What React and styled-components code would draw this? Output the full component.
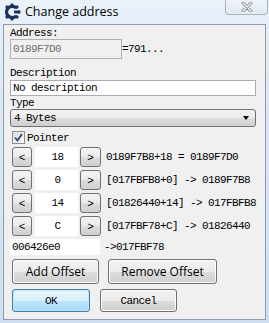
import styled, { createGlobalStyle } from "styled-components";

const GlobalStyle = createGlobalStyle`
  html, body { margin: 0; padding: 0; background: #c9dbee; }
`;

const mono = `"Liberation Mono", "DejaVu Sans Mono", monospace`;
const sans = `"Open Sans", "Noto Sans", sans-serif`;

const offsets = [
  { value: "18", text: "0189F7B8+18 = 0189F7D0" },
  { value: "0", text: "[017FBFB8+0] -> 0189F7B8" },
  { value: "14", text: "[01826440+14] -> 017FBFB8" },
  { value: "C", text: "[017FBF78+C] -> 01826440" },
];

const Window = styled.div`
  width: 269px;
  height: 323px;
  display: flex;
  flex-direction: column;
  background: linear-gradient(180deg, #e9f1f9 0%, #dce8f4 30%, #cfe0f0 100%);
  box-sizing: border-box;
`;

const TitleBar = styled.div`
  height: 24px;
  display: flex;
  align-items: flex-start;
  flex-shrink: 0;
`;

const AppIcon = styled.svg`
  width: 18px;
  height: 18px;
  margin: 3px 0 0 3px;
`;

const Title = styled.span`
  font-family: ${sans};
  font-size: 12.5px;
  color: #000;
  margin: 3px 0 0 4px;
  line-height: 17px;
`;

const CloseButton = styled.div`
  margin-left: auto;
  margin-right: 1px;
  width: 43px;
  height: 15px;
  box-sizing: border-box;
  border: 1px solid #a9b5c2;
  border-top: none;
  border-radius: 0 0 4px 4px;
  background: linear-gradient(180deg, #eef3f8 0%, #e2e9f1 100%);
  display: flex;
  align-items: center;
  justify-content: center;
`;

const Client = styled.div`
  flex: 1;
  margin: 0 3px 3px 3px;
  background: #f0f0f0;
  border: 1px solid #8e9bab;
  padding: 1px 0 0 6px;
  display: flex;
  flex-direction: column;
`;

const Label = styled.div`
  font-family: ${mono};
  font-size: 11px;
  letter-spacing: -0.6px;
  line-height: 12px;
  height: 12px;
  color: #000;
  margin-top: ${(p) => p.$top || 0}px;
`;

const Row = styled.div`
  display: flex;
  align-items: center;
  margin-top: ${(p) => p.$top || 0}px;
  margin-left: ${(p) => p.$indent || 0}px;
  gap: ${(p) => p.$gap || 0}px;
`;

const Edit = styled.div`
  box-sizing: border-box;
  width: ${(p) => p.$w}px;
  height: ${(p) => p.$h}px;
  border: 1px solid ${(p) => (p.$disabled ? "#adb2b5" : "#abadb3")};
  background: ${(p) => (p.$disabled ? "#f0f0f0" : "#fff")};
  color: ${(p) => (p.$disabled ? "#6d6d6d" : "#000")};
  font-family: ${mono};
  font-size: 11px;
  letter-spacing: -0.6px;
  padding-left: 2px;
  display: flex;
  align-items: center;
  justify-content: ${(p) => (p.$center ? "center" : "flex-start")};
`;

const Combo = styled.div`
  box-sizing: border-box;
  width: 246px;
  height: 18px;
  border: 1px solid #707070;
  border-radius: 3px;
  background: linear-gradient(180deg, #f2f2f2 0%, #ebebeb 50%, #dddddd 51%, #cfcfcf 100%);
  font-family: ${mono};
  font-size: 11px;
  letter-spacing: -0.6px;
  padding: 0 6px 0 3px;
  display: flex;
  align-items: center;
  justify-content: space-between;
`;

const Arrow = styled.span`
  width: 0;
  height: 0;
  border-left: 3.5px solid transparent;
  border-right: 3.5px solid transparent;
  border-top: 4px solid #000;
`;

const CheckBox = styled.span`
  box-sizing: border-box;
  width: 13px;
  height: 13px;
  border: 1px solid #8f8f8f;
  background: linear-gradient(135deg, #dcdcdc 0%, #fbfbfb 100%);
  display: flex;
  align-items: center;
  justify-content: center;
`;

const SmallButton = styled.div`
  box-sizing: border-box;
  width: ${(p) => p.$w || 20}px;
  height: 20px;
  border: 1px solid #707070;
  border-radius: 3px;
  background: linear-gradient(180deg, #f2f2f2 0%, #ebebeb 50%, #dddddd 51%, #cfcfcf 100%);
  font-family: ${mono};
  font-size: 11px;
  display: flex;
  align-items: flex-end;
  justify-content: center;
  padding-bottom: 2px;
`;

const Expr = styled.span`
  font-family: ${mono};
  font-size: 11px;
  letter-spacing: -0.6px;
  margin-left: ${(p) => p.$left || 0}px;
  white-space: nowrap;
`;

const Button = styled.div`
  box-sizing: border-box;
  width: ${(p) => p.$w}px;
  height: ${(p) => p.$h}px;
  border: 1px solid ${(p) => (p.$default ? "#3c7fb1" : "#707070")};
  border-radius: 3px;
  background: ${(p) =>
    p.$default
      ? "linear-gradient(180deg, #eaf6fd 0%, #d9f0fc 50%, #bee6fd 51%, #a7d9f5 100%)"
      : "linear-gradient(180deg, #f2f2f2 0%, #ebebeb 50%, #dddddd 51%, #cfcfcf 100%)"};
  box-shadow: inset 0 0 0 1px ${(p) => (p.$default ? "#c4e5f6" : "#fcfcfc")};
  font-family: ${(p) => (p.$mono ? mono : sans)};
  font-size: ${(p) => (p.$mono ? "11px" : "12px")};
  letter-spacing: ${(p) => (p.$mono ? "-0.6px" : "0")};
  color: #000;
  display: flex;
  align-items: center;
  justify-content: center;
`;

function Logo() {
  const teeth = [45, 90, 135, 180, 225, 270, 315];
  return (
    <AppIcon viewBox="0 0 18 18">
      <path
        d="M13.2 5.2 A5.6 5.6 0 1 0 13.2 12.8"
        fill="none"
        stroke="#1d2f5c"
        strokeWidth="3.2"
      />
      {teeth.map((a) => (
        <rect
          key={a}
          x="7.6"
          y="0.6"
          width="2.8"
          height="3"
          fill="#1d2f5c"
          transform={`rotate(${a - 90} 9 9)`}
        />
      ))}
      <rect x="11" y="7.6" width="6" height="2.8" fill="#1d2f5c" />
    </AppIcon>
  );
}

export default function App() {
  return (
    <>
      <GlobalStyle />
      <Window>
        <TitleBar>
          <Logo />
          <Title>Change address</Title>
          <CloseButton>
            <svg width="12" height="10" viewBox="0 0 12 10">
              <path d="M2 1 L10 9 M10 1 L2 9" stroke="#7a8491" strokeWidth="3" strokeLinecap="round" />
              <path d="M2 1 L10 9 M10 1 L2 9" stroke="#fff" strokeWidth="1.2" strokeLinecap="round" />
            </svg>
          </CloseButton>
        </TitleBar>
        <Client>
          <Label $top={1}>Address:</Label>
          <Row $top={0}>
            <Edit $w={112} $h={20} $disabled>0189F7D0</Edit>
            <Expr $left={0}>=791...</Expr>
          </Row>
          <Label $top={8}>Description</Label>
          <Edit $w={246} $h={16} style={{ marginTop: 1 }}>No description</Edit>
          <Label $top={1}>Type</Label>
          <Combo>
            4 Bytes
            <Arrow />
          </Combo>
          <Row $top={4} $indent={2} $gap={2}>
            <CheckBox>
              <svg width="9" height="9" viewBox="0 0 9 9">
                <path d="M1 4.5 L3.5 7.5 L8 1" fill="none" stroke="#2a4a7a" strokeWidth="1.8" />
              </svg>
            </CheckBox>
            <Expr>Pointer</Expr>
          </Row>
          {offsets.map((o, i) => (
            <Row key={i} $top={i === 0 ? 3 : 3} $indent={2}>
              <SmallButton>&lt;</SmallButton>
              <Edit $w={43} $h={20} $center style={{ border: "none", marginLeft: 3 }}>
                {o.value}
              </Edit>
              <SmallButton $w={21} style={{ marginLeft: 2 }}>&gt;</SmallButton>
              <Expr $left={5}>{o.text}</Expr>
            </Row>
          ))}
          <Row $top={3}>
            <Edit $w={90} $h={16} style={{ border: "none" }}>006426e0</Edit>
            <Expr $left={4}>-&gt;017FBF78</Expr>
          </Row>
          <Row $top={4} $indent={2} $gap={9}>
            <Button $w={87} $h={25}>Add Offset</Button>
            <Button $w={109} $h={25}>Remove Offset</Button>
          </Row>
          <Row $top={5} $indent={2} $gap={10}>
            <Button $w={78} $h={23} $default $mono>OK</Button>
            <Button $w={77} $h={23} $mono>Cancel</Button>
          </Row>
        </Client>
      </Window>
    </>
  );
}
